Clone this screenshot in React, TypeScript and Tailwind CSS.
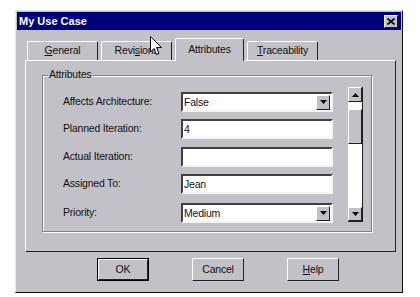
import React from 'react';

const face = 'bg-[#c2c1c8]';

function Raised({ className = '', children }: { className?: string; children?: React.ReactNode }) {
  return (
    <div className={`border border-t-white border-l-white border-b-[#202020] border-r-[#202020] ${className}`}>
      {children}
    </div>
  );
}

function Sunken({ className = '', children }: { className?: string; children?: React.ReactNode }) {
  return (
    <div className={`border-2 border-t-[#404040] border-l-[#404040] border-b-[#f4f4f4] border-r-[#f4f4f4] bg-white ${className}`}>
      {children}
    </div>
  );
}

function Combo({ value }: { value: string }) {
  return (
    <Sunken className="h-[20px] w-[152px] flex items-center">
      <span className="flex-1 pl-[1px] leading-none">{value}</span>
      <Raised className={`${face} w-[14px] h-[15px] mr-[1px] flex items-center justify-center`}>
        <svg width="7" height="4" viewBox="0 0 7 4">
          <path d="M0 0 H7 L3.5 4 Z" fill="#000" />
        </svg>
      </Raised>
    </Sunken>
  );
}

function TextBox({ value }: { value?: string }) {
  return (
    <Sunken className="h-[20px] w-[152px] flex items-center">
      <span className="pl-[1px] leading-none">{value}</span>
    </Sunken>
  );
}

function Tab({ label, u, selected }: { label: string; u: number; selected?: boolean }) {
  const chars = label.split('');
  return (
    <div
      className={`${face} flex items-center justify-center border border-b-0 border-t-white border-l-white border-r-[#202020] rounded-t-[2px] ${
        selected ? 'h-[23px] w-[69px] -mb-px relative z-10' : 'h-[19px] w-[71px]'
      }`}
    >
      <span>
        {chars.map((c, i) => (
          <span key={i} className={i === u ? 'underline' : ''}>
            {c}
          </span>
        ))}
      </span>
    </div>
  );
}

function Btn({ label, u, isDefault }: { label: string; u?: number; isDefault?: boolean }) {
  return (
    <div className={`${isDefault ? 'border border-black' : ''} w-[52px] h-[23px]`}>
      <Raised className={`${face} w-full h-full flex items-center justify-center`}>
        <span>
          {label.split('').map((c, i) => (
            <span key={i} className={i === u ? 'underline' : ''}>
              {c}
            </span>
          ))}
        </span>
      </Raised>
    </div>
  );
}

export default function App() {
  return (
    <div className="w-[420px] h-[297px] bg-white relative overflow-hidden font-['Liberation_Sans',Arial,sans-serif] text-[10.5px] text-[#111] tracking-[-0.2px]">
      <div className="pl-[15px] pt-[10px]">
        <div className={`${face} w-[388px] h-[283px] border border-t-[#e8e8e8] border-l-[#e8e8e8] border-b-[#101010] border-r-[#101010] p-[1px]`}>
          {/* title bar */}
          <div className="h-[18px] bg-[#00007c] flex items-center justify-between pl-[2px] pr-[3px]">
            <span className="text-white font-bold text-[11px] tracking-normal">My Use Case</span>
            <Raised className={`${face} w-[14px] h-[13px] flex items-center justify-center`}>
              <svg width="8" height="7" viewBox="0 0 8 7">
                <path d="M0.5 0.5 L7.5 6.5 M7.5 0.5 L0.5 6.5" stroke="#000" strokeWidth="1.6" />
              </svg>
            </Raised>
          </div>

          <div className="pl-[8px] pr-[5px] pt-[8px]">
            {/* tab strip */}
            <div className="flex items-end gap-[3px] pl-[2px] h-[22px]">
              <Tab label="General" u={0} />
              <Tab label="Revisions" u={4} />
              <Tab label="Attributes" u={-1} selected />
              <Tab label="Traceability" u={0} />
            </div>

            {/* tab panel */}
            <div className="h-[192px] border border-t-white border-l-white border-b-[#202020] border-r-[#202020] pl-[16px] pt-[14px]">
              <div className="relative w-[330px] h-[157px] border border-[#808080] shadow-[1px_1px_0_#fff,inset_1px_1px_0_#fff]">
                <span className={`absolute -top-[7px] left-[5px] ${face} px-[1px] leading-none`}>Attributes</span>

                <div className="flex pt-[16px]">
                  <div className="flex flex-col w-[138px] pl-[20px]">
                    <div className="h-[20px] flex items-center">Affects Architecture:</div>
                    <div className="h-[20px] mt-[7px] flex items-center">Planned Iteration:</div>
                    <div className="h-[20px] mt-[8px] flex items-center">Actual Iteration:</div>
                    <div className="h-[20px] mt-[7px] flex items-center">Assigned To:</div>
                    <div className="h-[20px] mt-[9px] flex items-center">Priority:</div>
                  </div>
                  <div className="flex flex-col">
                    <Combo value="False" />
                    <div className="mt-[7px]"><TextBox value="4" /></div>
                    <div className="mt-[8px]"><TextBox /></div>
                    <div className="mt-[7px]"><TextBox value="Jean" /></div>
                    <div className="mt-[9px]"><Combo value="Medium" /></div>
                  </div>

                  {/* scrollbar */}
                  <div className="ml-[15px] -mt-[5px] w-[15px] h-[135px] flex flex-col bg-white border-r border-b border-[#202020]">
                    <Raised className={`${face} h-[15px] flex items-center justify-center`}>
                      <svg width="7" height="4" viewBox="0 0 7 4">
                        <path d="M0 4 H7 L3.5 0 Z" fill="#000" />
                      </svg>
                    </Raised>
                    <div className="h-[7px]" />
                    <Raised className={`${face} h-[35px]`} />
                    <div className="flex-1" />
                    <Raised className={`${face} h-[14px] flex items-center justify-center`}>
                      <svg width="7" height="4" viewBox="0 0 7 4">
                        <path d="M0 0 H7 L3.5 4 Z" fill="#000" />
                      </svg>
                    </Raised>
                  </div>
                </div>
              </div>
            </div>

            {/* buttons */}
            <div className="flex gap-[43px] pl-[72px] pt-[6px]">
              <Btn label="OK" isDefault />
              <Btn label="Cancel" />
              <Btn label="Help" u={0} />
            </div>
          </div>
        </div>
      </div>

      {/* mouse cursor */}
      <svg className="absolute left-[150px] top-[36px]" width="13" height="21" viewBox="0 0 13 21">
        <path d="M0.5 0.5 V16 L4 12.5 L6.5 18.5 L9 17.5 L6.5 11.5 H11.5 Z" fill="#fff" stroke="#000" strokeWidth="1" />
      </svg>
    </div>
  );
}
